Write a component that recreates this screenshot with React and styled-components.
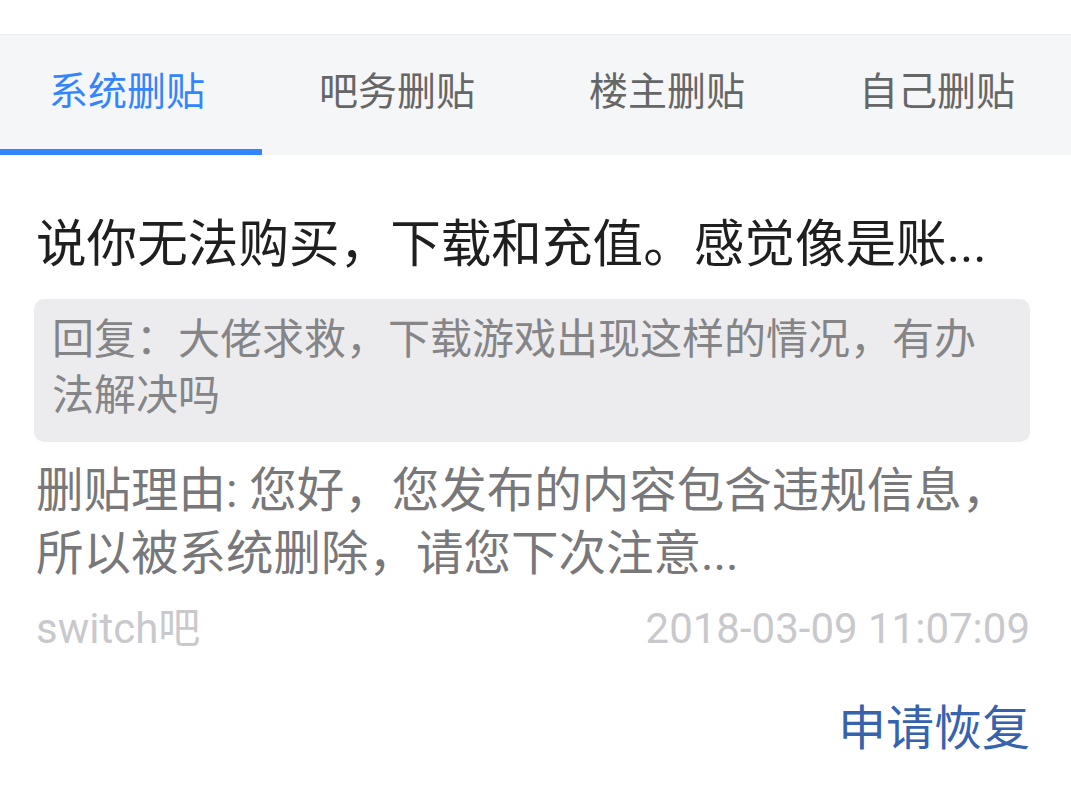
import React from "react";
import styled, { createGlobalStyle } from "styled-components";

const Global = createGlobalStyle`
  html, body { margin: 0; padding: 0; background: #ffffff; }
  body { font-family: Roboto, "Noto Sans CJK SC", sans-serif; }
  * { box-sizing: border-box; }
`;

const Page = styled.div`
  width: 1071px;
  min-height: 787px;
  background: #ffffff;
  padding-top: 34px;
`;

const TabBar = styled.nav`
  display: flex;
  height: 121px;
  background: #f5f6f8;
  border-top: 1px solid #ececee;
`;

const Tab = styled.div`
  position: relative;
  flex: 0 0 270px;
  display: flex;
  align-items: center;
  justify-content: center;
  padding-right: 16px;
  padding-bottom: 14px;
  font-size: 39px;
  color: ${(p) => (p.$active ? "#3385ff" : "#666666")};
  &::after {
    content: "";
    display: ${(p) => (p.$active ? "block" : "none")};
    position: absolute;
    left: 0;
    bottom: 0;
    width: 262px;
    height: 6px;
    background: #3385ff;
  }
`;

const Card = styled.section`
  padding: 60px 41px 0 36px;
  display: flex;
  flex-direction: column;
`;

const Title = styled.h2`
  margin: 0;
  font-size: 50.6px;
  font-weight: 400;
  line-height: 60px;
  color: #1f1f1f;
  white-space: nowrap;
  overflow: hidden;
`;

const Quote = styled.div`
  margin: 24px 0 0 -2px;
  background: #ececee;
  border-radius: 10px;
  padding: 13px 18px 18px 18px;
  font-size: 42px;
  line-height: 56px;
  color: #858587;
`;

const Reason = styled.p`
  margin: 18px 0 0;
  font-size: 47.5px;
  line-height: 63px;
  color: #78787a;
`;

const Meta = styled.div`
  margin-top: 15px;
  display: flex;
  justify-content: space-between;
  align-items: center;
  font-size: 42px;
  line-height: 56px;
  color: #c9c9cd;
`;

const Actions = styled.div`
  margin-top: 42px;
  display: flex;
  justify-content: flex-end;
`;

const Restore = styled.button`
  border: none;
  background: none;
  padding: 0;
  font-family: inherit;
  font-size: 48px;
  line-height: 60px;
  color: #3763ad;
`;

const tabs = ["系统删贴", "吧务删贴", "楼主删贴", "自己删贴"];

export default function App() {
  return (
    <Page>
      <Global />
      <TabBar>
        {tabs.map((t, i) => (
          <Tab key={t} $active={i === 0}>
            {t}
          </Tab>
        ))}
      </TabBar>
      <Card>
        <Title>说你无法购买，下载和充值。感觉像是账...</Title>
        <Quote>回复：大佬求救，下载游戏出现这样的情况，有办法解决吗</Quote>
        <Reason>
          删贴理由: 您好，您发布的内容包含违规信息，所以被系统删除，请您下次注意...
        </Reason>
        <Meta>
          <span>switch吧</span>
          <span>2018-03-09 11:07:09</span>
        </Meta>
        <Actions>
          <Restore>申请恢复</Restore>
        </Actions>
      </Card>
    </Page>
  );
}
